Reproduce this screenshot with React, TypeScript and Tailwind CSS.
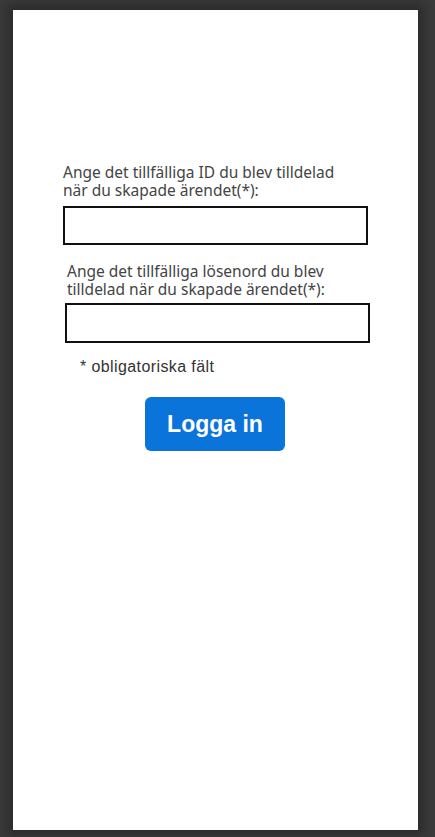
export default function App() {
  return (
    <div className="h-[837px] w-[435px] bg-[#3a3a3a] pt-[10px] pl-[13px]">
      <div className="h-[820px] w-[405px] bg-white shadow-[0_0_10px_6px_rgba(0,0,0,0.25)] pt-[153px]">
        <form className="flex flex-col">
          <label className="ml-[50px] w-[290px] text-[15.5px] leading-[18px] text-[#444] font-['Noto_Sans',sans-serif]">
            Ange det tillfälliga ID du blev tilldelad när du skapade ärendet(*):
          </label>
          <input
            type="text"
            className="ml-[50px] mt-[7px] h-[39px] w-[305px] border-2 border-[#111] bg-white"
          />
          <label className="ml-[54px] mt-[17px] w-[300px] text-[15.5px] leading-[18px] text-[#444] font-['Noto_Sans',sans-serif]">
            Ange det tillfälliga lösenord du blev tilldelad när du skapade ärendet(*):
          </label>
          <input
            type="password"
            className="ml-[52px] mt-[5px] h-[40px] w-[305px] border-2 border-[#111] bg-white"
          />
          <p className="ml-[67px] mt-[14px] text-[16px] leading-[20px] tracking-[0.4px] text-[#333] font-['Liberation_Sans',Arial,sans-serif]">
            * obligatoriska fält
          </p>
          <button
            type="button"
            className="ml-[132px] mt-[20px] h-[54px] w-[140px] rounded-[6px] bg-[#0a74da] text-[23px] font-bold text-white font-['Liberation_Sans',Arial,sans-serif]"
          >
            Logga in
          </button>
        </form>
      </div>
    </div>
  )
}
